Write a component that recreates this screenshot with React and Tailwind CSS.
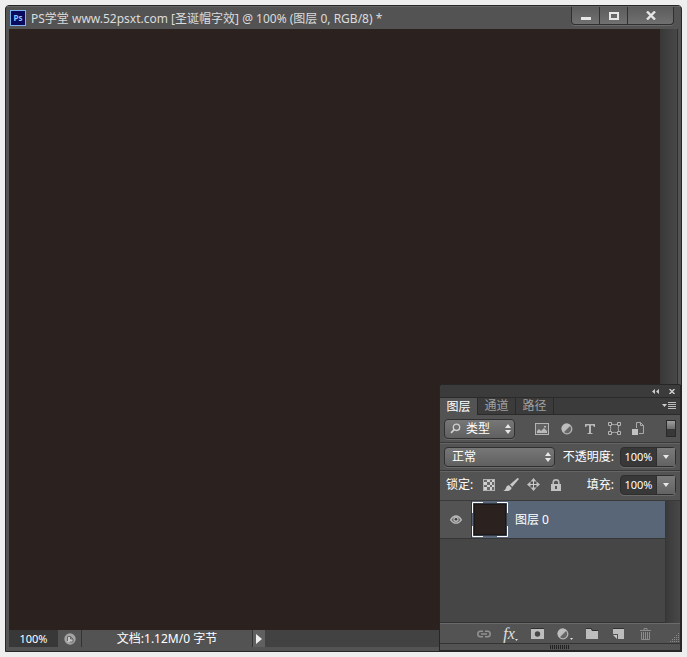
import React, { useState } from 'react';

const tabs = ['图层', '通道', '路径'];

const svgProps = { xmlns: 'http://www.w3.org/2000/svg', fill: 'none', 'aria-hidden': true };

function UpDown() {
  return (
    <svg {...svgProps} width="6" height="10" viewBox="0 0 6 10" className="absolute right-1 top-1/2 -translate-y-1/2 pointer-events-none">
      <path d="M3 0L6 4H0zM0 6H6L3 10z" fill="#e8e8e8" />
    </svg>
  );
}

function Caret() {
  return (
    <svg {...svgProps} width="6" height="4" viewBox="0 0 6 4">
      <path d="M0 0H6L3 4z" fill="#e8e8e8" />
    </svg>
  );
}

function HalfCircle() {
  return (
    <svg {...svgProps} width="12" height="12" viewBox="0 0 12 12">
      <circle cx="6" cy="6" r="4.8" fill="#666" stroke="#b4b4b4" strokeWidth="1.3" />
      <path d="M9.5 2.5A5 5 0 1 0 2.5 9.5z" fill="#bdbdbd" />
    </svg>
  );
}

function PercentField({ id, label }) {
  return (
    <div className="flex items-center">
      <label htmlFor={id} className="mr-1.5 whitespace-nowrap">{label}:</label>
      <div className="flex h-5 w-14 rounded-sm border border-[#2e2e2e] bg-[#383838] shadow-[0_1px_0_#6a6a6a]">
        <input
          id={id}
          defaultValue="100%"
          className="w-[35px] min-w-0 bg-transparent text-center text-[11px] text-white outline-none"
        />
        <button
          type="button"
          aria-label={label}
          className="flex flex-1 items-center justify-center border-l border-[#2e2e2e] bg-linear-to-b from-[#7a7a7a] to-[#636363]"
        >
          <Caret />
        </button>
      </div>
    </div>
  );
}

function IconButton({ label, className = '', children }) {
  return (
    <button type="button" aria-label={label} className={`flex h-4 items-center justify-center ${className}`}>
      {children}
    </button>
  );
}

function FilterRow() {
  return (
    <div className="flex h-7 items-center border-b border-[#3a3a3a] px-1">
      <div className="relative w-[71px] shrink-0">
        <select
          aria-label="类型"
          className="block h-5 w-full appearance-none rounded-sm border border-[#303030] bg-linear-to-b from-[#777] to-[#606060] pl-[21px] text-xs leading-4 text-white shadow-[0_1px_0_#6a6a6a] outline-none"
        >
          <option>类型</option>
        </select>
        <svg {...svgProps} width="11" height="11" viewBox="0 0 11 11" className="absolute left-1.5 top-1 pointer-events-none">
          <circle cx="6.5" cy="4.3" r="3.2" stroke="#cfcfcf" strokeWidth="1.3" />
          <path d="M4.2 6.7L1 9.8" stroke="#cfcfcf" strokeWidth="1.8" />
        </svg>
        <UpDown />
      </div>

      <div className="ml-5 flex flex-1 items-center justify-between">
        <IconButton label="像素图层">
          <svg {...svgProps} width="14" height="12" viewBox="0 0 14 12">
            <rect x=".5" y=".5" width="13" height="11" fill="#626262" stroke="#b4b4b4" />
            <path d="M2 10V8l2-2 2 2 3-3 3 3v2z" fill="#b9b9b9" />
            <rect x="9" y="3" width="2" height="1.5" fill="#b9b9b9" />
          </svg>
        </IconButton>
        <IconButton label="调整图层"><HalfCircle /></IconButton>
        <IconButton label="文字图层">
          <svg {...svgProps} width="12" height="12" viewBox="0 0 12 12">
            <path d="M1 1H11V4H10L9 2.4H7V10H8.5V11H3.5V10H5V2.4H3L2 4H1z" fill="#b8b8b8" />
          </svg>
        </IconButton>
        <IconButton label="形状图层">
          <svg {...svgProps} width="13" height="13" viewBox="0 0 13 13">
            <path d="M2 2Q6.5 3.5 11 2Q9.5 6.5 11 11Q6.5 9.5 2 11Q3.5 6.5 2 2z" stroke="#aaa" />
            <path d="M.5 .5h3v3h-3zM9.5 .5h3v3h-3zM.5 9.5h3v3h-3zM9.5 9.5h3v3h-3z" fill="#555" stroke="#b4b4b4" />
          </svg>
        </IconButton>
        <IconButton label="智能对象">
          <svg {...svgProps} width="12" height="13" viewBox="0 0 12 13">
            <path d="M4.5 6V.5H8.5L11.5 3.5V11.5H7" stroke="#aaa" />
            <path d="M8.5 .5V3.5H11.5" stroke="#aaa" />
            <rect y="7" width="6" height="6" fill="#c2c2c2" />
          </svg>
        </IconButton>
      </div>

      <button
        type="button"
        aria-label="过滤开关"
        className="ml-[22px] flex h-[17px] w-2.5 flex-col border border-[#2a2a2a] bg-[#383838]"
      >
        <span className="block h-2 w-full bg-linear-to-b from-[#a0a0a0] to-[#6c6c6c]" />
      </button>
    </div>
  );
}

function BlendRow() {
  return (
    <div className="flex h-7 items-center justify-between border-b border-[#3a3a3a] px-1 shadow-[inset_0_1px_0_#646464]">
      <div className="relative w-[111px]">
        <select
          aria-label="混合模式"
          className="block h-5 w-full appearance-none rounded-sm border border-[#303030] bg-linear-to-b from-[#777] to-[#606060] pl-[7px] text-xs leading-4 text-white shadow-[0_1px_0_#6a6a6a] outline-none"
        >
          <option>正常</option>
        </select>
        <UpDown />
      </div>
      <PercentField id="opacity" label="不透明度" />
    </div>
  );
}

function LockRow() {
  return (
    <div className="flex h-[30px] items-center justify-between border-b border-[#3a3a3a] px-1 pb-0.5 shadow-[inset_0_1px_0_#646464]">
      <div className="flex items-center">
        <span className="mr-2.5 whitespace-nowrap pl-0.5">锁定:</span>
        <IconButton label="锁定透明像素" className="w-3">
          <svg {...svgProps} width="12" height="12" viewBox="0 0 12 12">
            <rect width="12" height="12" fill="#b2b2b2" />
            <path d="M1 1h3v2h-3zM7 1h2v2h-2zM4 3h3v3h-3zM9 3h2v3h-2zM1 6h3v2h-3zM7 6h2v2h-2zM4 8h3v3h-3zM9 8h2v3h-2z" fill="#696969" />
            <path d="M4 1h3v2h-3zM9 1h2v2h-2zM1 3h3v3h-3zM7 3h2v3h-2zM4 6h3v2h-3zM9 6h2v2h-2zM1 8h3v3h-3zM7 8h2v3h-2z" fill="#d0d0d0" />
          </svg>
        </IconButton>
        <IconButton label="锁定图像像素" className="ml-2 w-4">
          <svg {...svgProps} width="16" height="14" viewBox="0 0 16 14">
            <path d="M15.5 .3L14.5 0L7 6.5L9.3 8.8L15.5 1.5z" fill="#c9c9c9" />
            <path d="M6.3 7.4L8.6 9.7C8.4 12.5 4.5 14 .3 12.4C2.6 12 2.6 10.6 3.2 9.2C3.9 7.8 5.2 7.2 6.3 7.4z" fill="#c9c9c9" />
          </svg>
        </IconButton>
        <IconButton label="锁定位置" className="ml-[7px] w-3.5">
          <svg {...svgProps} width="13" height="13" viewBox="0 0 13 13">
            <path d="M6.5 1V12M1 6.5H12" stroke="#ccc" />
            <path d="M6.5 0L9.5 3.5H3.5zM6.5 13L9.5 9.5H3.5zM0 6.5L3.5 3.5V9.5zM13 6.5L9.5 3.5V9.5z" fill="#c0c0c0" />
          </svg>
        </IconButton>
        <IconButton label="锁定全部" className="ml-2.5 w-3">
          <svg {...svgProps} width="10" height="12" viewBox="0 0 10 12">
            <path d="M2.2 6V3.5Q2.2 .9 5 .9Q7.8 .9 7.8 3.5V6" stroke="#b9b9b9" strokeWidth="1.6" />
            <rect y="5" width="10" height="7" fill="#c2c2c2" />
            <path d="M4 7h2v3h-2z" fill="#555" />
          </svg>
        </IconButton>
      </div>
      <PercentField id="fill" label="填充" />
    </div>
  );
}

function LayerList() {
  return (
    <div className="flex bg-[#464646]">
      <ul className="h-[122px] flex-1">
        <li className="flex h-[38px] border-b border-[#363636] bg-[#596678]">
          <button
            type="button"
            aria-label="图层可见性"
            className="flex w-8 items-center justify-center border-r border-[#363636] bg-[#535353]"
          >
            <svg {...svgProps} width="12" height="9" viewBox="0 0 12 9">
              <path d="M.6 4.8Q3 1 6 1T11.4 4.8Q9 8.2 6 8.2T.6 4.8z" fill="#666" stroke="#b9b9b9" strokeWidth="1.3" />
              <circle cx="6" cy="4.3" r="2.6" fill="#b9b9b9" />
              <circle cx="6" cy="4.3" r="1.3" fill="#3c3c3c" />
            </svg>
          </button>
          <div className="flex w-9 items-center justify-center">
            <svg {...svgProps} width="36" height="35" viewBox="0 0 36 35">
              <rect x="2" y="2" width="32" height="31" fill="#2b2220" stroke="#111" />
              <path d="M.5 11V.5H11M25 .5H35.5V11M35.5 24V34.5H25M11 34.5H.5V24" stroke="#fff" />
            </svg>
          </div>
          <span className="flex items-center pl-[7px] text-white">图层 0</span>
        </li>
      </ul>
      <div className="w-[15px] border-l border-[#363636] bg-linear-to-r from-[#3a3a3a] to-[#484848]" />
    </div>
  );
}

function PanelFooter() {
  return (
    <div className="flex h-5 items-center border-t border-[#6a6a6a] shadow-[0_-1px_0_#333]">
      <div className="mr-2.5 grid flex-1 grid-cols-7 pl-[30px]">
        <IconButton label="链接图层">
          <svg {...svgProps} width="14" height="8" viewBox="0 0 14 8">
            <path d="M6 1.2H3.5Q.8 1.2 .8 4T3.5 6.8H6M8 1.2H10.5Q13.2 1.2 13.2 4T10.5 6.8H8M4 4H10" stroke="#929292" strokeWidth="1.5" />
          </svg>
        </IconButton>
        <IconButton label="图层样式">
          <span className="font-['Liberation_Serif',serif] text-base leading-4 italic text-[#e0e0e0]">fx</span>
          <svg {...svgProps} width="3" height="14" viewBox="0 0 3 14"><path d="M0 12H3L1.5 14z" fill="#ddd" /></svg>
        </IconButton>
        <IconButton label="添加蒙版">
          <svg {...svgProps} width="13" height="11" viewBox="0 0 13 11">
            <rect width="13" height="11" fill="#bdbdbd" />
            <path d="M0 0H13V1H0z" fill="#303030" />
            <circle cx="6.5" cy="6" r="2.7" fill="#464646" />
          </svg>
        </IconButton>
        <IconButton label="新建调整图层">
          <HalfCircle />
          <svg {...svgProps} width="4" height="12" viewBox="0 0 4 12"><path d="M1 10H4L2.5 12z" fill="#ddd" /></svg>
        </IconButton>
        <IconButton label="新建组">
          <svg {...svgProps} width="12" height="11" viewBox="0 0 12 11">
            <path d="M0 11V1H5L6 3H12V11z" fill="#bdbdbd" />
            <path d="M0 .5H5.3L6.3 2.5H12" stroke="#303030" />
          </svg>
        </IconButton>
        <IconButton label="新建图层">
          <svg {...svgProps} width="11" height="11" viewBox="0 0 11 11">
            <path d="M0 1H11V11H5V6H0z" fill="#bdbdbd" />
            <path d="M0 .5H11" stroke="#303030" />
            <path d="M0 7H4V11z" fill="#c8c8c8" />
          </svg>
        </IconButton>
        <IconButton label="删除图层">
          <svg {...svgProps} width="11" height="12" viewBox="0 0 11 12">
            <path d="M0 2.5H11M4 2V.5H7V2M1.5 4V11.5H9.5V4M3.5 4V11M5.5 4V11M7.5 4V11" stroke="#8c8c8c" />
          </svg>
        </IconButton>
      </div>
      <svg {...svgProps} width="11" height="11" viewBox="0 0 11 11" className="self-end">
        <path d="M9 1h1v1h-1zM7 3h1v1h-1zM9 3h1v1h-1zM5 5h1v1h-1zM7 5h1v1h-1zM9 5h1v1h-1zM3 7h1v1h-1zM5 7h1v1h-1zM7 7h1v1h-1zM9 7h1v1h-1zM1 9h1v1h-1zM3 9h1v1h-1zM5 9h1v1h-1zM7 9h1v1h-1zM9 9h1v1h-1z" fill="#8a8a8a" />
      </svg>
    </div>
  );
}

function LayersPanel() {
  const [active, setActive] = useState('图层');

  return (
    <aside className="absolute -bottom-px -right-px w-[243px] overflow-hidden rounded-t border border-r-2 border-b-2 border-[#262626] bg-[#535353] text-xs leading-4 text-white">
      <div className="flex h-3 items-center justify-end gap-2.5 bg-[#3b3b3b] pr-[5px]">
        <button type="button" aria-label="折叠">
          <svg {...svgProps} width="7" height="5" viewBox="0 0 7 5" className="block">
            <path d="M3 0V5L0 2.5zM7 0V5L4 2.5z" fill="#ccc" />
          </svg>
        </button>
        <button type="button" aria-label="关闭面板">
          <svg {...svgProps} width="6" height="5" viewBox="0 0 6 5" className="block">
            <path d="M.5 0L5.5 5M5.5 0L.5 5" stroke="#ccc" strokeWidth="1.5" />
          </svg>
        </button>
      </div>

      <div className="flex h-[18px] items-stretch border-t border-[#2a2a2a] bg-[#3b3b3b]">
        {tabs.map((tab) => (
          <button
            key={tab}
            type="button"
            onClick={() => setActive(tab)}
            className={
              tab === active
                ? 'w-[37px] bg-[#535353] text-white'
                : 'w-[38px] border-b border-l border-[#2a2a2a] text-[#a0a0a0]'
            }
          >
            {tab}
          </button>
        ))}
        <div className="flex flex-1 items-center justify-end border-b border-l border-[#2a2a2a] pr-1">
          <button type="button" aria-label="面板菜单">
            <svg {...svgProps} width="14" height="8" viewBox="0 0 14 8" className="block">
              <path d="M0 2H5L2.5 5z" fill="#ccc" />
              <path d="M6 .5H14M6 2.5H14M6 4.5H14M6 6.5H14" stroke="#bbb" />
            </svg>
          </button>
        </div>
      </div>

      <FilterRow />
      <BlendRow />
      <LockRow />
      <LayerList />
      <PanelFooter />

      <div className="flex h-[7px] items-center justify-center border-t border-[#333]">
        <svg {...svgProps} width="20" height="4" viewBox="0 0 20 4">
          <path d="M.5 0V4M2.5 0V4M4.5 0V4M6.5 0V4M8.5 0V4M10.5 0V4M12.5 0V4M14.5 0V4M16.5 0V4M18.5 0V4" stroke="#222" />
        </svg>
      </div>
    </aside>
  );
}

function TitleBar() {
  return (
    <header className="flex h-[23px] items-start justify-between border-t border-[#666]">
      <div className="flex items-end gap-[5px] pl-1 pt-[3px]">
        {/* App badge */}
        <span className="mb-px flex h-4 w-4 items-center justify-center border border-[#7db4f0] bg-[#0b0b5e] text-[8px] font-bold leading-3 text-[#8fc4ff]">
          Ps
        </span>
        <h1 className="whitespace-nowrap text-xs leading-4 text-[#dcdcdc]">
          PS学堂 www.52psxt.com [圣诞帽字效] @ 100% (图层 0, RGB/8) *
        </h1>
      </div>
      <div className="mr-[7px] flex h-[18px] rounded-b border border-t-0 border-[#303030] bg-linear-to-b from-[#5c5c5c] to-[#707070] shadow-[0_1px_0_#6a6a6a]">
        <button type="button" aria-label="最小化" className="flex w-[27px] items-center justify-center">
          <svg {...svgProps} width="10" height="10" viewBox="0 0 10 10"><path d="M0 6H10V9H0z" fill="#e6e6e6" /></svg>
        </button>
        <button type="button" aria-label="最大化" className="flex w-7 items-center justify-center border-l border-[#303030]">
          <svg {...svgProps} width="10" height="8" viewBox="0 0 10 8">
            <rect x="1" y="1" width="8" height="6" stroke="#e6e6e6" strokeWidth="2" />
          </svg>
        </button>
        <button type="button" aria-label="关闭" className="flex w-[46px] items-center justify-center border-l border-[#303030]">
          <svg {...svgProps} width="10" height="9" viewBox="0 0 10 9">
            <path d="M1 .5L9 8.5M9 .5L1 8.5" stroke="#e6e6e6" strokeWidth="2.4" />
          </svg>
        </button>
      </div>
    </header>
  );
}

function StatusBar() {
  return (
    <footer className="flex h-[17px] items-stretch bg-[#424242] text-xs leading-[17px] text-white">
      <input
        aria-label="缩放"
        defaultValue="100%"
        className="w-[49px] bg-[#383838] text-center text-[11px] text-white outline-none"
      />
      <button type="button" aria-label="文档同步" className="flex w-6 items-center justify-center border-r border-[#333] bg-[#535353]">
        <svg {...svgProps} width="12" height="12" viewBox="0 0 12 12">
          <circle cx="6" cy="6" r="5.7" fill="#a4a4a4" />
          <path d="M3.5 9V3.5H6.5V6H9V9z" fill="#c8c8c8" />
          <path d="M3.5 8V3.5H6.5L9 6V9H6M6.5 3.5V6H9" stroke="#666" />
        </svg>
      </button>
      <div className="w-[170px] bg-[#535353] text-center">文档:1.12M/0 字节</div>
      <button type="button" aria-label="状态信息" className="flex w-[13px] items-center justify-center border-l border-[#333] bg-[#606060]">
        <svg {...svgProps} width="6" height="10" viewBox="0 0 6 10"><path d="M0 0L6 5L0 10z" fill="#f0f0f0" /></svg>
      </button>
    </footer>
  );
}

export default function App() {
  return (
    <div className="flex min-h-screen bg-[#eee] p-[5px] font-['Noto_Sans','Noto_Sans_CJK_SC',sans-serif]">
      <div className="relative flex flex-1 flex-col rounded-t border border-[#262626] bg-[#535353]">
        <TitleBar />
        <div className="mx-[3px] mb-1 flex flex-1 flex-col">
          <div className="flex flex-1">
            <main className="flex-1 bg-[#2b2220]" />
            <div className="w-[18px] border-r border-[#303030] bg-linear-to-r from-[#383838] to-[#484848]" />
          </div>
          <StatusBar />
        </div>
        <LayersPanel />
      </div>
    </div>
  );
}
